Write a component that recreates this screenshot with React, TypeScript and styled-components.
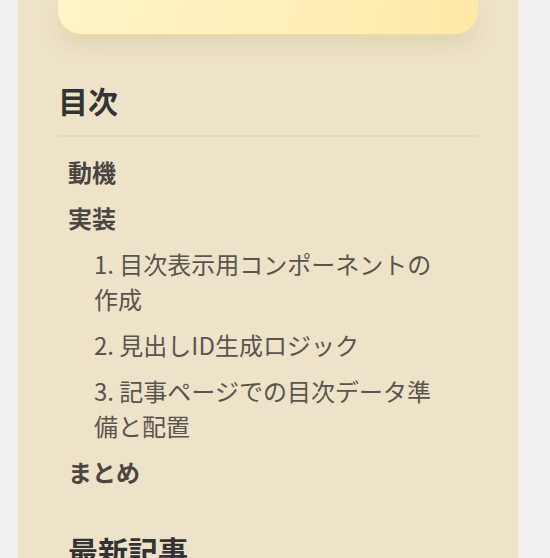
import React from "react";
import styled, { createGlobalStyle } from "styled-components";

const GlobalStyle = createGlobalStyle`
  html, body {
    margin: 0;
    padding: 0;
    background: #f0f0f0;
  }
  body {
    font-family: "Noto Sans CJK JP", "Noto Sans", sans-serif;
  }
`;

type TocItem = {
  text: string;
  children?: string[];
};

const toc: TocItem[] = [
  { text: "動機" },
  {
    text: "実装",
    children: [
      "1. 目次表示用コンポーネントの作成",
      "2. 見出しID生成ロジック",
      "3. 記事ページでの目次データ準備と配置",
    ],
  },
  { text: "まとめ" },
];

const App = () => {
  return (
    <>
      <GlobalStyle />
      <Sidebar>
        <Card />
        <TocSection>
          <Heading>目次</Heading>
          <TocList>
            {toc.map((item) => (
              <TocEntry key={item.text}>
                <TopLink>{item.text}</TopLink>
                {item.children && (
                  <SubList>
                    {item.children.map((c) => (
                      <SubEntry key={c}>{c}</SubEntry>
                    ))}
                  </SubList>
                )}
              </TocEntry>
            ))}
          </TocList>
        </TocSection>
        <RecentSection>
          <RecentHeading>最新記事</RecentHeading>
        </RecentSection>
      </Sidebar>
    </>
  );
};

export default App;

const Sidebar = styled.aside`
  margin-left: 18px;
  width: 500px;
  min-height: 558px;
  background: #ede3c8;
  padding: 0 40px;
  box-sizing: border-box;
  overflow: hidden;
`;

const Card = styled.div`
  height: 34px;
  border-radius: 0 0 24px 24px;
  background: linear-gradient(100deg, #fff3c8 0%, #ffefb8 55%, #ffe9a8 100%);
  border-bottom: 1px solid #f7dc8e;
  box-shadow: 0 10px 22px rgba(150, 120, 60, 0.14);
`;

const TocSection = styled.section`
  margin-top: 45px;
`;

const Heading = styled.h2`
  margin: 0;
  font-size: 30px;
  line-height: 41px;
  font-weight: 700;
  color: #333;
  padding-bottom: 14px;
  border-bottom: 2px solid #e2dac4;
`;

const TocList = styled.ul`
  list-style: none;
  margin: 17px 0 0;
  padding: 0 0 0 10px;
`;

const TocEntry = styled.li`
  margin: 0;
`;

const TopLink = styled.div`
  font-size: 24px;
  line-height: 35px;
  font-weight: 600;
  color: #4a4540;
  margin-bottom: 11px;
`;

const SubList = styled.ul`
  list-style: none;
  margin: 0;
  padding: 0 0 0 26px;
`;

const SubEntry = styled.li`
  font-size: 24px;
  line-height: 35px;
  font-weight: 400;
  color: #5a544e;
  margin-bottom: 11px;
  padding-right: 30px;
`;

const RecentSection = styled.section`
  margin-top: 41px;
  padding-left: 10px;
`;

const RecentHeading = styled.h2`
  margin: 0;
  font-size: 30px;
  line-height: 41px;
  font-weight: 700;
  color: #333;
`;
